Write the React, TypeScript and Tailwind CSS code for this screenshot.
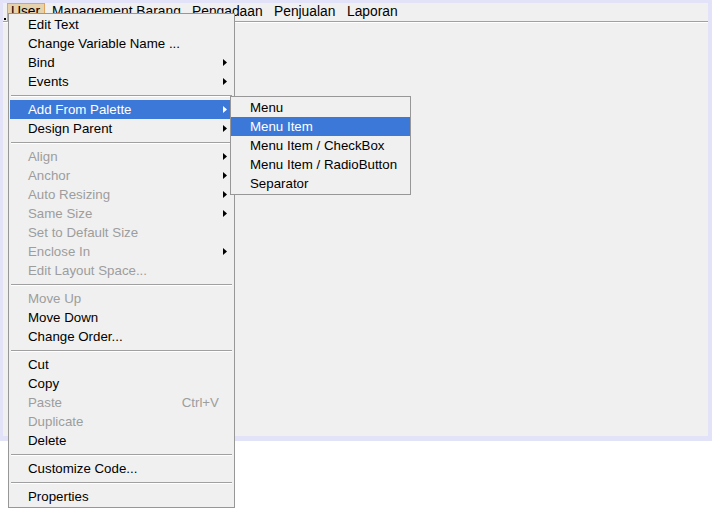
import React from 'react';

type Item =
  | { sep: true }
  | { label: string; disabled?: boolean; sub?: boolean; active?: boolean; shortcut?: string; sep?: false };

const mainItems: Item[] = [
  { label: 'Edit Text' },
  { label: 'Change Variable Name ...' },
  { label: 'Bind', sub: true },
  { label: 'Events', sub: true },
  { sep: true },
  { label: 'Add From Palette', sub: true, active: true },
  { label: 'Design Parent', sub: true },
  { sep: true },
  { label: 'Align', sub: true, disabled: true },
  { label: 'Anchor', sub: true, disabled: true },
  { label: 'Auto Resizing', sub: true, disabled: true },
  { label: 'Same Size', sub: true, disabled: true },
  { label: 'Set to Default Size', disabled: true },
  { label: 'Enclose In', sub: true, disabled: true },
  { label: 'Edit Layout Space...', disabled: true },
  { sep: true },
  { label: 'Move Up', disabled: true },
  { label: 'Move Down' },
  { label: 'Change Order...' },
  { sep: true },
  { label: 'Cut' },
  { label: 'Copy' },
  { label: 'Paste', disabled: true, shortcut: 'Ctrl+V' },
  { label: 'Duplicate', disabled: true },
  { label: 'Delete' },
  { sep: true },
  { label: 'Customize Code...' },
  { sep: true },
  { label: 'Properties' },
];

const subItems = ['Menu', 'Menu Item', 'Menu Item / CheckBox', 'Menu Item / RadioButton', 'Separator'];

function Arrow({ white }: { white?: boolean }) {
  return (
    <svg width="4" height="7" viewBox="0 0 4 7" className="absolute right-[6px] top-[6px]">
      <path d="M0 0 L4 3.5 L0 7 Z" fill={white ? '#ffffff' : '#000000'} />
    </svg>
  );
}

export default function App() {
  return (
    <div
      className="relative w-[713px] h-[509px] bg-white text-[13.3px] leading-none text-black"
      style={{ fontFamily: '"Liberation Sans", Arial, sans-serif' }}
    >
      {/* design frame */}
      <div className="w-[712px] h-[441px] bg-[#e2e2f9] pt-[3px] pl-[3px] pr-[4px] pb-[5px]">
        <div className="w-full h-full bg-[#f0f0f0] flex flex-col">
          <div className="h-[19px] flex items-center pl-[4px] border-b border-[#a0a0a0] text-[13.8px]">
            <div className="w-[38px] h-[19px] pl-[3px] flex items-center bg-[#e6d3ad] border border-[#e0a45c]">User</div>
            <div className="w-[147px] pl-[7px]">Management Barang</div>
            <div className="w-[82px]">Pengadaan</div>
            <div className="w-[73px]">Penjualan</div>
            <div>Laporan</div>
          </div>
          <div className="h-px bg-white" />
        </div>
      </div>

      <div className="absolute left-[4px] top-[18px] w-[2px] h-[2px] bg-black" />

      {/* popup menu */}
      <div className="absolute left-[8px] top-[13px] w-[227px] bg-[#f0f0f0] border border-[#979797] py-px px-px">
        {mainItems.map((it, i) =>
          it.sep ? (
            <div key={i} className="h-[9px] flex flex-col justify-center px-px">
              <div className="h-px bg-[#a0a0a0]" />
              <div className="h-px bg-white" />
            </div>
          ) : (
            <div
              key={i}
              className={`relative h-[19px] flex items-center pl-[18px] pr-[14px] ${
                it.active ? 'bg-[#3c78d8] text-white' : it.disabled ? 'text-[#9d9d9d]' : 'text-black'
              }`}
            >
              <span className="flex-1">{it.label}</span>
              {it.shortcut && <span>{it.shortcut}</span>}
              {it.sub && <Arrow white={it.active} />}
            </div>
          )
        )}
      </div>

      {/* submenu */}
      <div className="absolute left-[230px] top-[96px] w-[181px] bg-[#f0f0f0] border border-[#979797] py-px">
        {subItems.map((s, i) => (
          <div
            key={s}
            className={`h-[19px] flex items-center pl-[19px] ${i === 1 ? 'bg-[#3c78d8] text-white' : 'text-black'}`}
          >
            {s}
          </div>
        ))}
      </div>
    </div>
  );
}
